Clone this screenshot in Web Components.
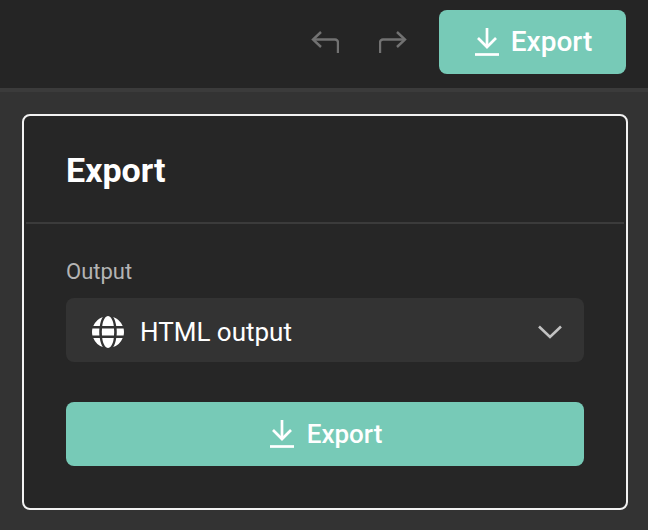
<!DOCTYPE html>
<html>
<head>
<meta charset="utf-8">
<style>
  html, body { margin: 0; height: 100%; }
  body { background: #333333; font-family: Roboto, sans-serif; overflow: hidden; }
</style>
</head>
<body>
<template id="download-icon">
  <svg viewBox="0 0 24 28" fill="none" stroke="currentColor" stroke-width="2.7">
    <path d="M12 0v18"/>
    <path d="M3 10l9 9 9-9"/>
    <path d="M0 26.500h24"/>
  </svg>
</template>

<app-header>
  <icon-button>
    <svg width="28" height="22" viewBox="0 0 28 22" fill="none" stroke="currentColor" stroke-width="2.4">
      <path d="M10 1L2 8.500l8 7.500"/>
      <path d="M2 8.500h22a3 3 0 0 1 3 3V22"/>
    </svg>
  </icon-button>
  <icon-button>
    <svg width="28" height="22" viewBox="0 0 28 22" fill="none" stroke="currentColor" stroke-width="2.4">
      <path d="M18 1l8 7.500-8 7.500"/>
      <path d="M26 8.500H4a3 3 0 0 0-3 3V22"/>
    </svg>
  </icon-button>
  <export-button compact>Export</export-button>
</app-header>

<export-panel heading="Export">
  <output-select label="Output">HTML output</output-select>
  <export-button>Export</export-button>
</export-panel>

<script>
class AppHeader extends HTMLElement {
  constructor() {
    super();
    this.attachShadow({mode: 'open'}).innerHTML = `
      <style>
        :host {
          display: flex;
          align-items: center;
          justify-content: flex-end;
          box-sizing: border-box;
          height: 92px;
          padding: 0 22px 4px 0;
          background: #252525;
          border-bottom: 4px solid #3b3b3b;
        }
        ::slotted(icon-button) { margin-right: 40px; }
        ::slotted(icon-button:nth-child(2)) { margin-right: 32px; }
      </style>
      <slot></slot>`;
  }
}

class IconButton extends HTMLElement {
  constructor() {
    super();
    this.attachShadow({mode: 'open'}).innerHTML = `
      <style>
        :host { display: flex; color: #727272; }
      </style>
      <slot></slot>`;
  }
}

class ExportButton extends HTMLElement {
  constructor() {
    super();
    const root = this.attachShadow({mode: 'open'});
    root.innerHTML = `
      <style>
        :host {
          display: flex;
          align-items: center;
          justify-content: center;
          box-sizing: border-box;
          height: 64px;
          padding-left: 2px;
          border-radius: 8px;
          background: #77cab7;
          color: #fff;
          font-size: 26px;
          font-weight: 500;
          gap: 13px;
        }
        :host([compact]) {
          width: 187px;
          font-size: 28px;
          gap: 12px;
        }
        :host([compact]) .label { padding-bottom: 2px; }
        svg { width: 24px; height: 28px; display: block; }
      </style>
      <span class="icon"></span>
      <span class="label"><slot></slot></span>`;
    const icon = document.getElementById('download-icon').content.cloneNode(true);
    root.querySelector('.icon').replaceWith(icon);
  }
}

class ExportPanel extends HTMLElement {
  constructor() {
    super();
    this.attachShadow({mode: 'open'}).innerHTML = `
      <style>
        :host {
          display: block;
          box-sizing: border-box;
          height: 396px;
          margin: 22px 20px 0 22px;
          background: #262626;
          border: 2px solid #f2f2f2;
          border-radius: 8px;
          color: #fff;
        }
        h2 {
          margin: 0 2px;
          height: 108px;
          box-sizing: border-box;
          padding: 31px 40px 0;
          font-size: 34px;
          line-height: 46px;
          font-weight: 700;
          border-bottom: 2px solid #3b3b3b;
        }
        .body {
          display: flex;
          flex-direction: column;
          gap: 40px;
          padding: 36px 42px 0;
        }
      </style>
      <h2></h2>
      <div class="body"><slot></slot></div>`;
    this.shadowRoot.querySelector('h2').textContent = this.getAttribute('heading');
  }
}

class OutputSelect extends HTMLElement {
  constructor() {
    super();
    this.attachShadow({mode: 'open'}).innerHTML = `
      <style>
        :host { display: block; }
        label {
          display: block;
          font-size: 22px;
          line-height: 24px;
          color: #b4b4b4;
          margin-bottom: 14px;
        }
        .box {
          display: flex;
          align-items: center;
          box-sizing: border-box;
          height: 64px;
          padding: 3px 22px 0 26px;
          border-radius: 8px;
          background: #333333;
          color: #fff;
          font-size: 26px;
          gap: 16px;
        }
        .value { flex: 1; }
        svg { display: block; }
      </style>
      <label></label>
      <div class="box">
        <svg width="32" height="32" viewBox="0 0 32 32" fill="#fff">
          <path d="M16 0c-2.600 0-5 3.900-5.800 10h11.600C21 3.900 18.600 0 16 0z"/>
          <path d="M16 32c-2.600 0-5-3.900-5.800-10h11.600C21 28.100 18.600 32 16 32z"/>
          <path d="M10 12.500h12a32 32 0 0 1 0 7H10a32 32 0 0 1 0-7z"/>
          <path d="M.4 12.500h7a38 38 0 0 0 0 7h-7a16 16 0 0 1 0-7z"/>
          <path d="M31.600 12.500h-7a38 38 0 0 1 0 7h7a16 16 0 0 0 0-7z"/>
          <path d="M10.800.9A16 16 0 0 0 1.300 10h6.500C8.300 6.300 9.300 3.100 10.800.9z"/>
          <path d="M21.200.9A16 16 0 0 1 30.700 10h-6.500c-.5-3.700-1.500-6.900-3-9.100z"/>
          <path d="M10.800 31.100A16 16 0 0 1 1.300 22h6.500c.5 3.700 1.500 6.900 3 9.100z"/>
          <path d="M21.200 31.100A16 16 0 0 0 30.700 22h-6.500c-.5 3.700-1.500 6.900-3 9.100z"/>
        </svg>
        <span class="value"><slot></slot></span>
        <svg width="24" height="14" viewBox="0 0 24 14" fill="none" stroke="#c2c2c2" stroke-width="2.600">
          <path d="M1 1.500L12 12 23 1.500"/>
        </svg>
      </div>`;
    this.shadowRoot.querySelector('label').textContent = this.getAttribute('label');
  }
}

customElements.define('app-header', AppHeader);
customElements.define('icon-button', IconButton);
customElements.define('export-button', ExportButton);
customElements.define('export-panel', ExportPanel);
customElements.define('output-select', OutputSelect);
</script>
</body>
</html>
